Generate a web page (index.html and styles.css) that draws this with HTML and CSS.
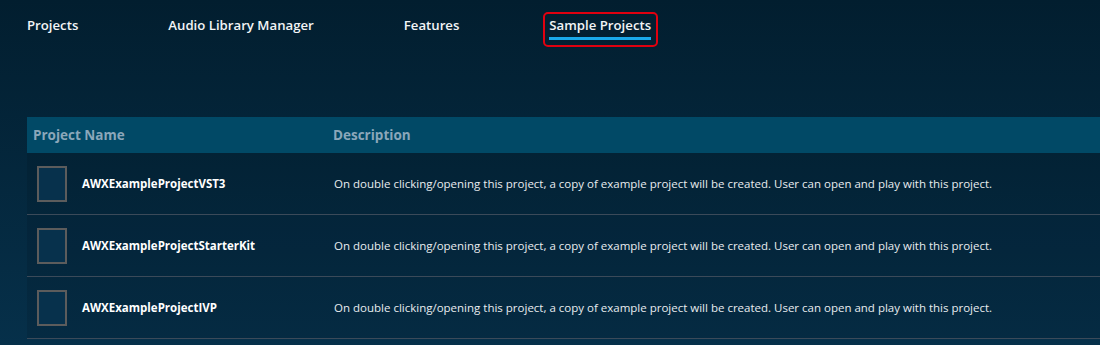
FILE: index.html
```html
<!DOCTYPE html>
<html lang="en">
<head>
    <meta charset="UTF-8">
    <meta name="viewport" content="width=device-width, initial-scale=1.0">
    <title>Sample Projects</title>
    <link rel="stylesheet" href="styles.css">
</head>
<body>
    <nav class="tabs">
        <div class="tab"><span class="tab-label">Projects</span></div>
        <div class="tab"><span class="tab-label">Audio Library Manager</span></div>
        <div class="tab"><span class="tab-label">Features</span></div>
        <div class="tab active"><span class="tab-label">Sample Projects</span></div>
    </nav>

    <div class="table">
        <div class="table-head">
            <div class="col-name">Project Name</div>
            <div class="col-desc">Description</div>
        </div>

        <div class="row">
            <div class="col-name">
                <div class="thumb"></div>
                <span class="project-name">AWXExampleProjectVST3</span>
            </div>
            <div class="col-desc">On double clicking/opening this project, a copy of example project will be created. User can open and play with this project.</div>
        </div>

        <div class="row">
            <div class="col-name">
                <div class="thumb"></div>
                <span class="project-name">AWXExampleProjectStarterKit</span>
            </div>
            <div class="col-desc">On double clicking/opening this project, a copy of example project will be created. User can open and play with this project.</div>
        </div>

        <div class="row">
            <div class="col-name">
                <div class="thumb"></div>
                <span class="project-name">AWXExampleProjectIVP</span>
            </div>
            <div class="col-desc">On double clicking/opening this project, a copy of example project will be created. User can open and play with this project.</div>
        </div>
    </div>
</body>
</html>
```

FILE: styles.css
```css
* {
    margin: 0;
    padding: 0;
    box-sizing: border-box;
}

body {
    font-family: "Open Sans", "Noto Sans", sans-serif;
    background: linear-gradient(180deg, #021e2f 0%, #06304a 100%);
    min-height: 100vh;
    color: #ffffff;
    overflow: hidden;
}

/* top tabs */
.tabs {
    display: flex;
    gap: 77px;
    padding: 12px 0 0 21px;
}

.tab {
    display: flex;
    flex-direction: column;
    align-items: flex-start;
    padding: 2px 5px 5px 4px;
    border: 2px solid transparent;
    border-radius: 5px;
}

.tab-label {
    font-size: 13.2px;
    font-weight: 600;
    line-height: 18px;
    color: #f2f4f6;
    padding-bottom: 3px;
    border-bottom: 3px solid transparent;
}

.tab.active {
    border-color: #e0000f;
}

.tab.active .tab-label {
    border-bottom-color: #1aa9ea;
}

/* project table */
.table {
    margin: 70px 0 0 27px;
}

.table-head {
    display: flex;
    align-items: center;
    height: 36px;
    background: #014966;
    font-size: 13.5px;
    font-weight: 700;
    color: #8ba7ba;
}

.table-head .col-name {
    padding-left: 6px;
}

.table-head .col-desc {
    padding-left: 6px;
}

.col-name {
    width: 300px;
    flex-shrink: 0;
    display: flex;
    align-items: center;
}

.col-desc {
    flex: 1;
}

.row {
    display: flex;
    align-items: center;
    height: 62px;
    border-bottom: 1px solid #3b4a59;
    background: rgba(0, 10, 20, 0.12);
}

.row .col-name {
    padding-left: 10px;
}

.row .col-desc {
    padding-left: 7px;
    font-size: 11.5px;
    color: #e8ecef;
}

.thumb {
    width: 30px;
    height: 36px;
    border: 2px solid #5c5c5c;
    background: #07314c;
    margin-right: 15px;
}

.project-name {
    font-size: 11.5px;
    font-weight: 700;
    color: #ffffff;
}
```
